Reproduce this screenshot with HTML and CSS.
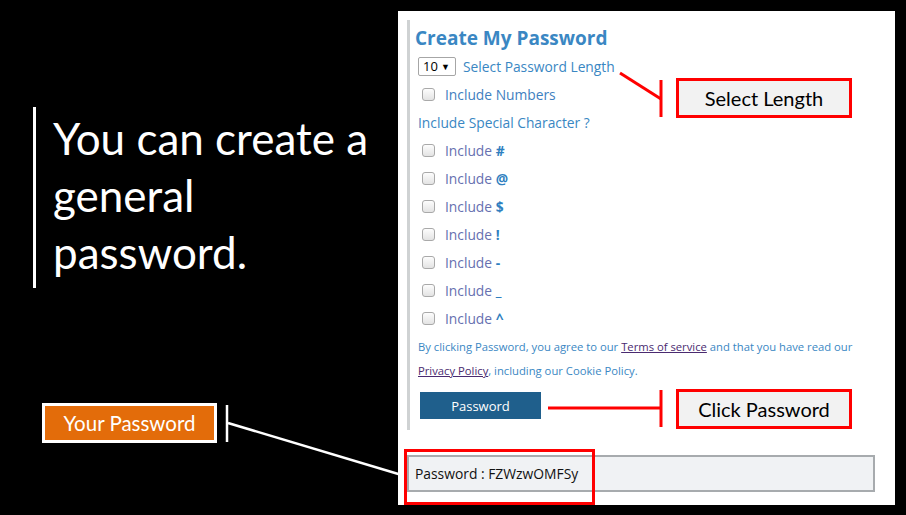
FILE: index.html
```html
<!DOCTYPE html>
<html lang="en">
<head>
<meta charset="utf-8">
<title>Create My Password</title>
<link rel="stylesheet" href="styles.css">
</head>
<body>
<div class="stage">
  <div class="slide-left">
    <div class="headline">You can create a<br>general<br>password.</div>
  </div>

  <div class="panel">
    <div class="form">
      <div class="title">Create My Password</div>
      <div class="row">
        <span class="select">10 <span class="caret">▼</span></span>
        <span class="blue">Select Password Length</span>
      </div>
      <div class="row check"><span class="box"></span><span class="lbl num">Include Numbers</span></div>
      <div class="row"><span class="blue">Include Special Character ?</span></div>
      <div class="row check"><span class="box"></span><span class="lbl">Include <b>#</b></span></div>
      <div class="row check"><span class="box"></span><span class="lbl">Include <b>@</b></span></div>
      <div class="row check"><span class="box"></span><span class="lbl">Include <b>$</b></span></div>
      <div class="row check"><span class="box"></span><span class="lbl">Include <b>!</b></span></div>
      <div class="row check"><span class="box"></span><span class="lbl">Include <b>-</b></span></div>
      <div class="row check"><span class="box"></span><span class="lbl">Include <b>_</b></span></div>
      <div class="row check"><span class="box"></span><span class="lbl">Include <b>^</b></span></div>
      <p class="terms">By clicking Password, you agree to our <a href="#">Terms of service</a> and that you have read our<br><a href="#">Privacy Policy</a>, including our Cookie Policy.</p>
      <button class="btn" type="button">Password</button>
    </div>
    <div class="output">Password : FZWzwOMFSy</div>
  </div>

  <svg class="lines" width="906" height="515" viewBox="0 0 906 515">
    <line x1="620" y1="73" x2="661" y2="99" stroke="#ff0000" stroke-width="3"/>
    <line x1="661" y1="80" x2="661" y2="117" stroke="#ff0000" stroke-width="3"/>
    <line x1="548" y1="408" x2="661" y2="408" stroke="#ff0000" stroke-width="3"/>
    <line x1="661" y1="390" x2="661" y2="427" stroke="#ff0000" stroke-width="3"/>
    <line x1="227" y1="405" x2="227" y2="442" stroke="#ffffff" stroke-width="2.5"/>
    <line x1="228" y1="423" x2="405" y2="476" stroke="#ffffff" stroke-width="2.5"/>
  </svg>

  <div class="callout callout-length">Select Length</div>
  <div class="callout callout-click">Click Password</div>
  <div class="your-pass">Your Password</div>
  <div class="highlight"></div>
</div>
</body>
</html>
```

FILE: styles.css
```css
* { box-sizing: border-box; }

html, body {
  margin: 0;
  padding: 0;
  background: #000;
}

.stage {
  position: relative;
  width: 906px;
  height: 515px;
  background: #000;
  display: flex;
  overflow: hidden;
}

.slide-left {
  width: 398px;
  flex: none;
  padding: 107px 0 0 33px;
}

.headline {
  border-left: 3px solid #fff;
  padding: 3px 0 7px 17px;
  color: #fff;
  font-family: Lato, "Open Sans", sans-serif;
  font-size: 44px;
  line-height: 57px;
  width: 350px;
  white-space: nowrap;
}

.panel {
  width: 497px;
  height: 494px;
  margin-top: 11px;
  background: #fff;
  padding-top: 9px;
  font-family: "Open Sans", sans-serif;
  flex: none;
}

.form {
  margin-left: 9px;
  border-left: 3px solid #cfd2d3;
  padding: 4px 0 11px 8px;
  height: 410px;
}

.title {
  height: 28px;
  line-height: 28px;
  margin-left: -3px;
  font-size: 19px;
  font-weight: 700;
  color: #3a87c3;
}

.row {
  height: 28px;
  display: flex;
  align-items: center;
  font-size: 13.8px;
}

.blue { color: #3a87c3; }

.select {
  width: 38px;
  height: 19px;
  border: 1px solid #a6a6a6;
  border-radius: 2px;
  color: #000;
  font-size: 13px;
  line-height: 17px;
  padding-left: 4px;
  margin-right: 7px;
  display: flex;
  align-items: center;
  gap: 3px;
}

.caret { font-size: 9px; }

.box {
  width: 13px;
  height: 13px;
  margin-left: 4px;
  margin-right: 10px;
  border: 1px solid #a9a9a9;
  border-radius: 3px;
  background: linear-gradient(#fdfdfd, #e3e3e3);
  flex: none;
}

.lbl { color: #6670b0; }
.lbl.num { color: #3f80c0; }
.lbl b { color: #2f7fc0; }

.terms {
  margin: 3px 0 0;
  font-size: 11.25px;
  line-height: 24px;
  color: #3a87c3;
  white-space: nowrap;
}

.terms a { color: #4a2a70; }

.btn {
  display: block;
  margin: 9px 0 0 2px;
  width: 121px;
  height: 27px;
  border: 0;
  background: #1f5f8c;
  color: #fff;
  font-family: "Open Sans", sans-serif;
  font-size: 13px;
}

.output {
  margin: 25px 0 0 9px;
  width: 468px;
  height: 37px;
  border: 2px solid #a7abae;
  background: #f0f2f4;
  color: #111;
  font-size: 13.85px;
  line-height: 33px;
  padding-left: 6px;
}

.lines {
  position: absolute;
  left: 0;
  top: 0;
}

.callout {
  position: absolute;
  width: 176px;
  height: 40px;
  border: 3px solid #ff0000;
  background: #f2f2f2;
  color: #000;
  font-family: Lato, sans-serif;
  font-size: 20px;
  display: flex;
  align-items: center;
  justify-content: center;
}

.callout-length { left: 676px; top: 78px; }
.callout-click { left: 676px; top: 389px; }

.your-pass {
  position: absolute;
  left: 42px;
  top: 403px;
  width: 175px;
  height: 40px;
  border: 3px solid #fff;
  background: #e36c0a;
  color: #fff;
  font-family: Lato, sans-serif;
  font-size: 20.5px;
  display: flex;
  align-items: center;
  justify-content: center;
}

.highlight {
  position: absolute;
  left: 404px;
  top: 449px;
  width: 191px;
  height: 56px;
  border: 3px solid #ff0000;
}
```
